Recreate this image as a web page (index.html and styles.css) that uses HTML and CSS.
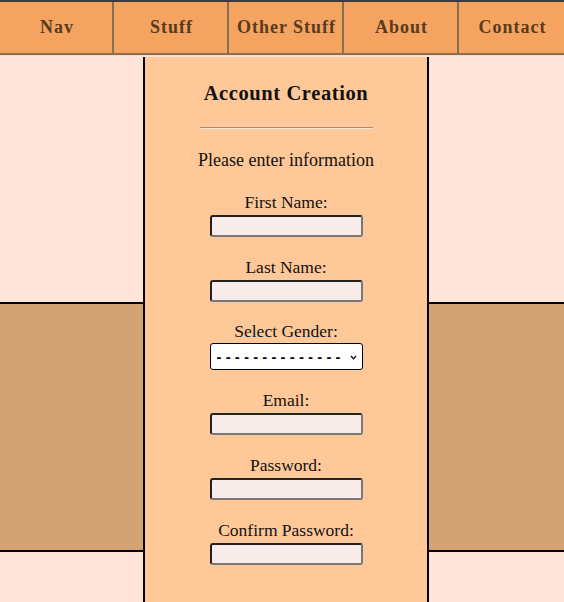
FILE: index.html
```html
<!DOCTYPE html>
<html>
<head>
<meta charset="utf-8">
<link rel="stylesheet" href="styles.css">
</head>
<body>
<nav class="nav">
  <a class="nav-item">Nav</a>
  <a class="nav-item">Stuff</a>
  <a class="nav-item">Other Stuff</a>
  <a class="nav-item">About</a>
  <a class="nav-item">Contact</a>
</nav>
<div class="page">
  <div class="side">
    <div class="block light"></div>
    <div class="block band"></div>
    <div class="block light"></div>
  </div>
  <main class="card">
    <h1 class="title">Account Creation</h1>
    <hr class="rule">
    <p class="intro">Please enter information</p>
    <form class="form">
      <div class="field"><label>First Name:</label><input class="box" type="text"></div>
      <div class="field"><label>Last Name:</label><input class="box" type="text"></div>
      <div class="field gender"><label>Select Gender:</label>
        <div class="select"><span>- - - - - - - - - - - - - -</span><svg width="7" height="5" viewBox="0 0 7 5"><path d="M1 1 L3.5 3.8 L6 1" fill="none" stroke="#000" stroke-width="1.2"/></svg></div>
      </div>
      <div class="field"><label>Email:</label><input class="box" type="text"></div>
      <div class="field"><label>Password:</label><input class="box" type="password"></div>
      <div class="field"><label>Confirm Password:</label><input class="box" type="password"></div>
    </form>
  </main>
  <div class="side">
    <div class="block light"></div>
    <div class="block band"></div>
    <div class="block light"></div>
  </div>
</div>
</body>
</html>
```
FILE: styles.css
```css
html, body {
  margin: 0;
  padding: 0;
  height: 100%;
}
body {
  background: #ffe5d9;
  font-family: "Liberation Serif", serif;
  overflow: hidden;
}
.nav {
  display: grid;
  grid-template-columns: 113px 115px 115px 115px 1fr;
  height: 51px;
  background: #f4a460;
  border-top: 2px solid #3c3c3c;
  border-bottom: 2px solid #8a7050;
  box-shadow: 0 1px 0 #f6dcc8;
}
.nav-item {
  display: flex;
  align-items: center;
  justify-content: center;
  white-space: nowrap;
  border-left: 1px solid #85704f;
  border-right: 1px solid #85704f;
  color: #5a3a1c;
  font-weight: bold;
  font-size: 18px;
  letter-spacing: 1px;
  padding-left: 2px;
}
.nav-item:first-child { border-left: none; }
.nav-item:last-child { border-right: none; }
.page {
  display: grid;
  grid-template-columns: 143px 286px 1fr;
  margin-top: 2px;
  height: 545px;
}
.side {
  display: grid;
  grid-template-rows: 245px 250px 1fr;
}
.band {
  background: #d4a373;
  border-top: 2px solid #000;
  border-bottom: 2px solid #000;
}
.card {
  background: #ffc899;
  border-left: 2px solid #000;
  border-right: 2px solid #000;
  display: flex;
  flex-direction: column;
  align-items: center;
}
.title {
  margin: 25px 0 0;
  font-size: 20.5px;
  font-weight: bold;
  letter-spacing: 0.6px;
  color: #111;
}
.rule {
  width: 173px;
  margin: 22px 0 0;
  border: none;
  border-top: 1px solid #a58a74;
  border-bottom: 1px solid #f5e3d3;
  height: 0;
}
.intro {
  margin: 21px 0 0;
  font-size: 18px;
  color: #111;
}
.form {
  display: flex;
  flex-direction: column;
  align-items: center;
  gap: 20px;
  margin-top: 21px;
}
.field {
  display: flex;
  flex-direction: column;
  align-items: center;
  gap: 3px;
}
.field.gender {
  margin-top: -1px;
}
.field label {
  font-size: 17.5px;
  color: #111;
  line-height: 20px;
}
.box {
  width: 153px;
  height: 22px;
  box-sizing: border-box;
  margin: 0;
  background: #f7ecea;
  border: 2px solid #222;
  border-right-color: #777;
  border-bottom-color: #777;
  border-radius: 3px;
}
.select {
  width: 153px;
  height: 27px;
  box-sizing: border-box;
  background: #fff;
  border: 1px solid #000;
  border-radius: 3px;
  display: flex;
  align-items: center;
  justify-content: space-between;
  padding: 2px 5px 0 6px;
  font-family: "DejaVu Sans", sans-serif;
  font-size: 12px;
  font-weight: bold;
  margin-top: -1px;
}
```
